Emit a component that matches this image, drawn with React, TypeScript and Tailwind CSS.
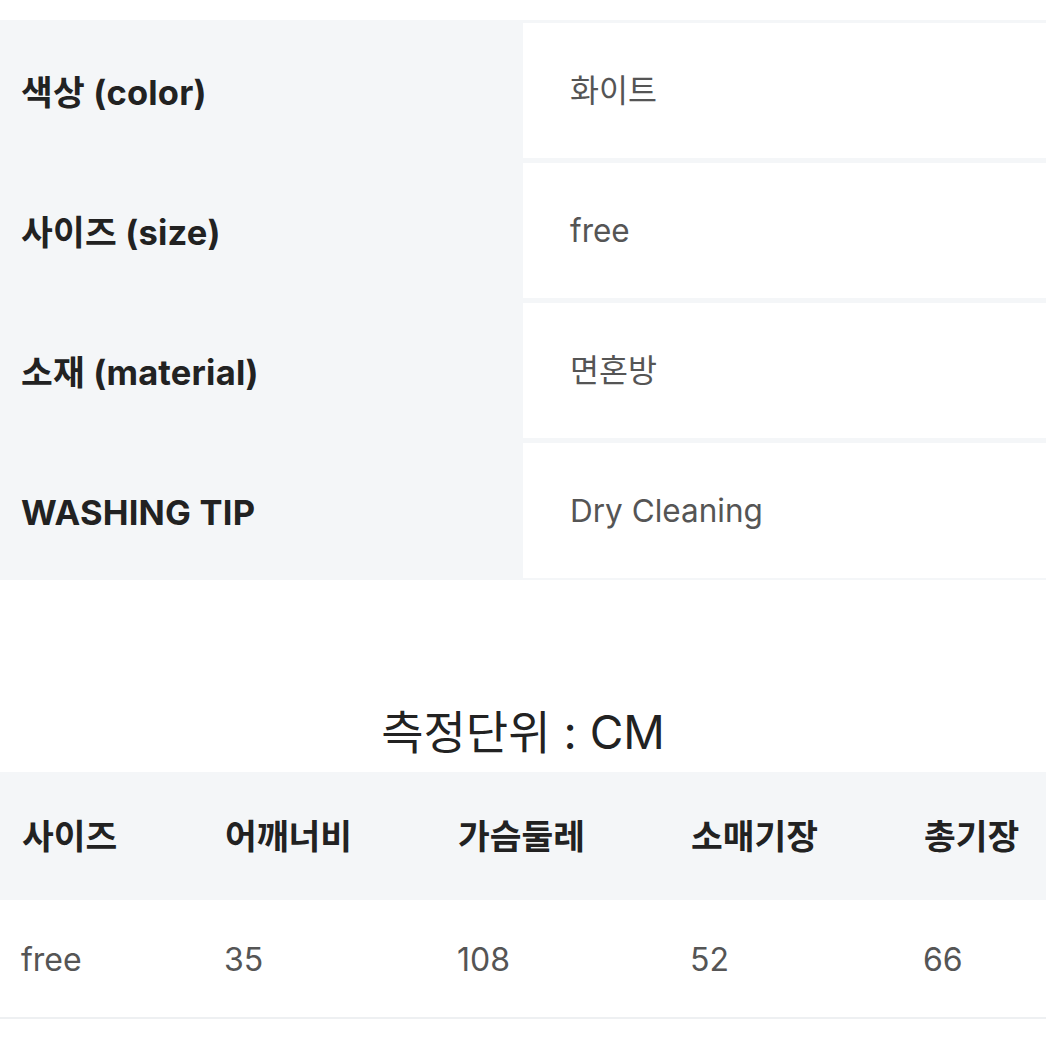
import React from "react";

const rows = [
  ["색상 (color)", "화이트"],
  ["사이즈 (size)", "free"],
  ["소재 (material)", "면혼방"],
  ["WASHING TIP", "Dry Cleaning"],
];

const heads = ["사이즈", "어깨너비", "가슴둘레", "소매기장", "총기장"];
const vals = ["free", "35", "108", "52", "66"];

export default function App() {
  return (
    <div
      className="w-[1046px] h-[1046px] bg-white overflow-hidden"
      style={{ fontFamily: "Inter, 'Noto Sans CJK KR', sans-serif" }}
    >
      <div className="h-[20px]" />
      <div className="bg-[#f4f6f8] flex flex-col gap-[5px] pt-[3px] pb-[2px]">
        {rows.map(([k, v], i) => (
          <div key={i} className="flex h-[135px]">
            <div className="w-[523px] pl-[21px] flex items-center text-[34.5px] font-bold text-[#222] pt-[4px] tracking-[0.2px]">
              {k}
            </div>
            <div className="flex-1 bg-white pl-[47px] flex items-center text-[31.5px] text-[#555]">
              {v}
            </div>
          </div>
        ))}
      </div>
      <div className="h-[192px] flex justify-center items-center pt-[112px]">
        <div className="text-[46px] text-[#222] leading-none">측정단위 : CM</div>
      </div>
      <div className="bg-[#f4f6f8] h-[128px] grid grid-cols-[203px_233px_233px_233px_1fr] items-center">
        {heads.map((h, i) => (
          <div key={i} className="pl-[22px] text-[34.5px] font-bold text-[#222] pt-[1px]">
            {h}
          </div>
        ))}
      </div>
      <div className="h-[119px] border-b-2 border-[#eef0f2] grid grid-cols-[203px_233px_233px_233px_1fr] items-center">
        {vals.map((h, i) => (
          <div key={i} className="pl-[21px] text-[32px] text-[#555] pt-[2px]">
            {h}
          </div>
        ))}
      </div>
    </div>
  );
}
